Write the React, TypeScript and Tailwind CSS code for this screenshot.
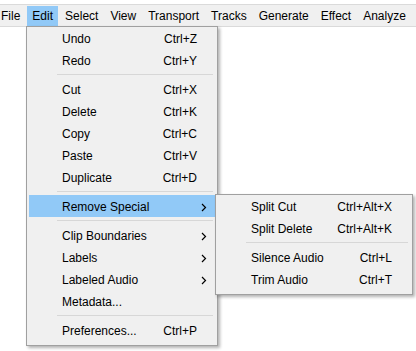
import { Fragment } from "react";

type Item =
  | { sep: true }
  | { label: string; shortcut?: string; sub?: boolean; active?: boolean };

const barItems = ["File", "Edit", "Select", "View", "Transport", "Tracks", "Generate", "Effect", "Analyze"];

const editItems: Item[] = [
  { label: "Undo", shortcut: "Ctrl+Z" },
  { label: "Redo", shortcut: "Ctrl+Y" },
  { sep: true },
  { label: "Cut", shortcut: "Ctrl+X" },
  { label: "Delete", shortcut: "Ctrl+K" },
  { label: "Copy", shortcut: "Ctrl+C" },
  { label: "Paste", shortcut: "Ctrl+V" },
  { label: "Duplicate", shortcut: "Ctrl+D" },
  { sep: true },
  { label: "Remove Special", sub: true, active: true },
  { sep: true },
  { label: "Clip Boundaries", sub: true },
  { label: "Labels", sub: true },
  { label: "Labeled Audio", sub: true },
  { label: "Metadata..." },
  { sep: true },
  { label: "Preferences...", shortcut: "Ctrl+P" },
];

const removeItems: Item[] = [
  { label: "Split Cut", shortcut: "Ctrl+Alt+X" },
  { label: "Split Delete", shortcut: "Ctrl+Alt+K" },
  { sep: true },
  { label: "Silence Audio", shortcut: "Ctrl+L" },
  { label: "Trim Audio", shortcut: "Ctrl+T" },
];

const Chevron = () => (
  <svg width="6" height="9" viewBox="0 0 6 9" className="ml-[4px]">
    <polyline points="1,1 4.5,4.5 1,8" fill="none" stroke="#000" strokeWidth="1.2" />
  </svg>
);

const MenuList = ({ items }: { items: Item[] }) => (
  <div className="px-[2px] pb-[4px]">
    {items.map((el, i) =>
      "sep" in el ? (
        <div key={i} className="h-[7px] flex items-center">
          <div className="h-px flex-1 ml-[28px] mr-[2px] bg-[#d7d7d7]" />
        </div>
      ) : (
        <div
          key={i}
          className={`h-[22px] pt-[2px] flex items-center pl-[33px] leading-[16px] ${el.active ? "bg-[#91c9f7]" : ""}`}
        >
          <span className="flex-1 whitespace-nowrap">{el.label}</span>
          {el.shortcut && <span className="whitespace-nowrap">{el.shortcut}</span>}
          <span className="w-[18px] flex items-center">{el.sub && <Chevron />}</span>
        </div>
      )
    )}
  </div>
);

export default function App() {
  return (
    <div
      className="relative w-[416px] h-[351px] bg-white overflow-hidden text-[12px] text-black"
      style={{ fontFamily: '"Liberation Sans", Arial, sans-serif' }}
    >
      <div className="mt-[4px] border-t border-b border-[#dadada] bg-[#f0f0f0] h-[23px] pt-[1px]">
        <div className="flex gap-[2px] -ml-[4px]">
          {barItems.map((name) => (
            <Fragment key={name}>
              <div
                className={`h-[20px] px-[5px] flex items-center whitespace-nowrap ${name === "Edit" ? "bg-[#91c9f7]" : ""}`}
              >
                {name}
              </div>
            </Fragment>
          ))}
        </div>
      </div>

      <div className="absolute left-[26px] top-[26px] w-[192px] bg-[#f0f0f0] border border-[#a0a0a0] shadow-[2px_2px_3px_rgba(0,0,0,0.3)]">
        <MenuList items={editItems} />
      </div>

      <div className="absolute left-[215px] top-[194px] w-[198px] bg-[#f0f0f0] border border-[#a0a0a0] shadow-[2px_2px_3px_rgba(0,0,0,0.3)]">
        <MenuList items={removeItems} />
      </div>
    </div>
  );
}
